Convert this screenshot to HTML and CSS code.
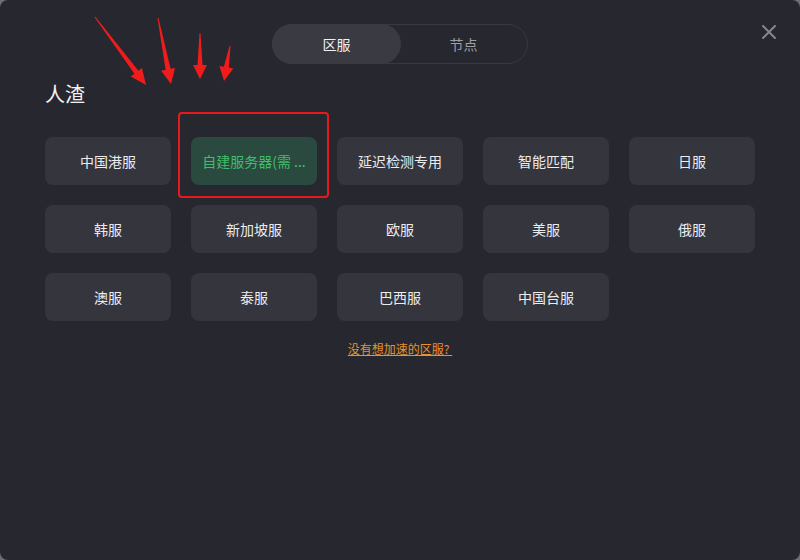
FILE: index.html
```html
<!DOCTYPE html>
<html lang="zh-CN">
<head>
    <meta charset="UTF-8">
    <title>区服选择</title>
    <link rel="stylesheet" href="styles.css">
</head>
<body>
    <div class="window">
        <!-- Tabs -->
        <div class="tabs-row">
            <div class="tabs">
                <div class="tab active">区服</div>
                <div class="tab">节点</div>
            </div>
        </div>
        <button class="close" aria-label="关闭">
            <svg width="16" height="16" viewBox="0 0 16 16">
                <path d="M2 2 L14 14 M14 2 L2 14" stroke="#85868c" stroke-width="2" stroke-linecap="round"/>
            </svg>
        </button>

        <div class="game-name">人渣</div>

        <!-- Server list -->
        <div class="server-grid">
            <div class="server">中国港服</div>
            <div class="server selected" title="自建服务器(需要自行搭建)">自建服务器(需 ...</div>
            <div class="server">延迟检测专用</div>
            <div class="server">智能匹配</div>
            <div class="server">日服</div>
            <div class="server">韩服</div>
            <div class="server">新加坡服</div>
            <div class="server">欧服</div>
            <div class="server">美服</div>
            <div class="server">俄服</div>
            <div class="server">澳服</div>
            <div class="server">泰服</div>
            <div class="server">巴西服</div>
            <div class="server">中国台服</div>
        </div>

        <div class="missing">
            <a href="#">没有想加速的区服?&nbsp;</a>
        </div>

        <!-- Annotation overlay -->
        <svg class="annotations" width="800" height="560" viewBox="0 0 800 560">
            <rect x="179" y="113" width="149" height="84" rx="3" fill="none" stroke="#e8191c" stroke-width="2"/>
            <g fill="#f01c1c">
                <polygon points="94.6,17.3 134.4,73.7 130.8,76.4 146,85 142,68 138.4,70.7 95.4,16.7"/>
                <polygon points="157.5,18.1 165.6,69.8 161.2,70.7 171,84 175,67.9 170.6,68.8 158.5,17.9"/>
                <polygon points="199.5,33 197.5,65 193,65 200,79 207,65 202.5,65 200.5,33"/>
                <polygon points="229.5,45.9 223.9,66.8 219.5,66 224,81 233.3,68.4 228.9,67.6 230.5,46.1"/>
            </g>
        </svg>
    </div>
</body>
</html>
```

FILE: styles.css
```css
/* General */
body {
    margin: 0;
    padding: 0;
    background-color: #6e6f74;
    font-family: "Noto Sans CJK SC", "Noto Sans", sans-serif;
}

.window {
    position: relative;
    width: 800px;
    height: 560px;
    box-sizing: border-box;
    background-color: #27282f;
    border-radius: 8px;
    overflow: hidden;
    padding: 24px 45px 0 45px;
    color: #e8e8ea;
}

/* Tabs */
.tabs-row {
    display: flex;
    justify-content: center;
}

.tabs {
    display: flex;
    width: 256px;
    height: 40px;
    box-sizing: border-box;
    border: 1px solid #393a41;
    border-radius: 20px;
}

.tab {
    flex: 1;
    display: flex;
    align-items: center;
    justify-content: center;
    font-size: 14px;
    color: #9d9ea3;
    border-radius: 20px;
    margin: -1px;
}

.tab.active {
    background-color: #3a3b42;
    color: #f2f2f4;
}

.close {
    position: absolute;
    top: 24px;
    right: 23px;
    width: 16px;
    height: 16px;
    padding: 0;
    border: none;
    background: none;
    cursor: pointer;
}

/* Title */
.game-name {
    margin-top: 16px;
    font-size: 20px;
    line-height: 28px;
    color: #f2f2f4;
}

/* Server grid */
.server-grid {
    display: grid;
    grid-template-columns: repeat(5, 126px);
    grid-auto-rows: 48px;
    gap: 20px;
    margin-top: 29px;
}

.server {
    display: flex;
    align-items: center;
    justify-content: center;
    background-color: #34353d;
    border-radius: 8px;
    font-size: 14px;
    color: #ececee;
    white-space: nowrap;
}

.server.selected {
    background-color: #2b4a3f;
    color: #3fbe6c;
}

/* Footer link */
.missing {
    margin-top: 20px;
    text-align: center;
    font-size: 12px;
    line-height: 16px;
}

.missing a {
    color: #e8922e;
    text-decoration: underline;
}

.annotations {
    position: absolute;
    top: 0;
    left: 0;
    pointer-events: none;
}
```
